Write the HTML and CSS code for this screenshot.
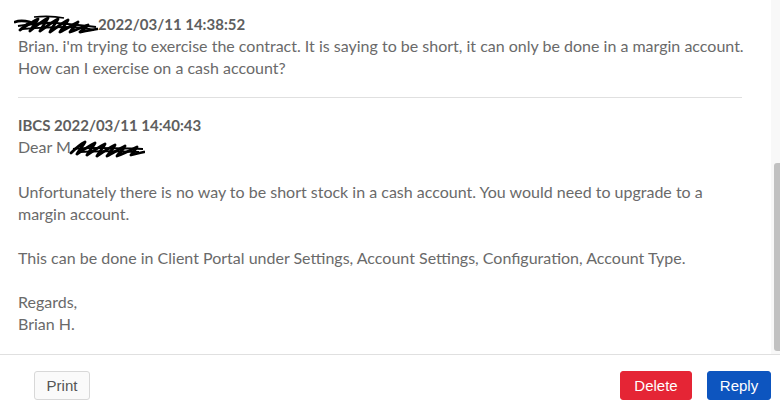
FILE: index.html
```html
<!DOCTYPE html>
<html>
<head>
<meta charset="utf-8">
<link rel="stylesheet" href="styles.css">
</head>
<body>
<div class="dialog">
  <div class="body-row">
    <div class="thread">
      <div class="msg">
        <div class="msg-head"><span class="redact redact-name"><svg width="84" height="22" viewBox="0 0 84 22"><path d="M1 9 C6 7 12 8 16 9 C12 12 8 15 6 17 C12 13 18 9 24 6 C22 10 18 14 16 18 C22 13 28 8 34 5 C32 9 28 14 26 18 C32 14 38 9 44 6 C42 10 38 14 36 19 C42 15 48 10 54 7 C52 11 48 15 46 19 C52 16 58 12 64 9 C62 12 58 16 56 19 C62 17 68 14 74 12 C72 15 68 17 66 19 C72 18 78 17 83 16" fill="none" stroke="#000" stroke-width="2.8" stroke-linecap="round" stroke-linejoin="round"/><path d="M4 13 C18 11 30 9 42 10 C54 11 66 12 82 14" fill="none" stroke="#000" stroke-width="2.2"/><path d="M8 16 C22 15 36 14 50 14 C62 14 72 15 80 17" fill="none" stroke="#000" stroke-width="2"/><path d="M20 4 C30 3 40 3 50 5" fill="none" stroke="#000" stroke-width="1.6"/></svg></span>2022/03/11 14:38:52</div>
        <p>Brian. i'm trying to exercise the contract. It is saying to be short, it can only be done in a margin account. How can I exercise on a cash account?</p>
      </div>
      <div class="msg">
        <div class="msg-head">IBCS 2022/03/11 14:40:43</div>
        <p>Dear M<span class="redact redact-inline"><svg width="76" height="22" viewBox="0 0 76 22"><path d="M2 16 C6 12 10 8 16 5 C14 9 10 13 8 17 C14 13 20 9 26 6 C24 10 20 14 18 18 C24 14 30 10 36 7 C34 11 30 15 28 19 C34 15 40 11 46 8 C44 12 40 16 38 19 C44 16 50 12 56 9 C54 13 50 16 48 19 C54 17 62 13 68 10 C66 13 64 16 62 18 C66 17 70 16 75 15" fill="none" stroke="#000" stroke-width="2.8" stroke-linecap="round" stroke-linejoin="round"/><path d="M4 12 C20 10 40 11 74 12" fill="none" stroke="#000" stroke-width="2"/><path d="M10 15 C26 14 46 14 70 15" fill="none" stroke="#000" stroke-width="1.8"/></svg></span></p>
        <p>Unfortunately there is no way to be short stock in a cash account. You would need to upgrade to a margin account.</p>
        <p>This can be done in Client Portal under Settings, Account Settings, Configuration, Account Type.</p>
        <p>Regards,<br>Brian H.</p>
      </div>
    </div>
    <div class="scrollbar"><div class="thumb"></div></div>
  </div>
  <div class="footer">
    <button class="btn btn-print">Print</button>
    <div class="actions">
      <button class="btn btn-delete">Delete</button>
      <button class="btn btn-reply">Reply</button>
    </div>
  </div>
</div>
</body>
</html>
```
FILE: styles.css
```css
* { box-sizing: border-box; }
html, body { margin: 0; padding: 0; background: #fff; }
body {
  width: 780px;
  height: 404px;
  overflow: hidden;
  font-family: Lato, "Open Sans", sans-serif;
  color: #6a6a6a;
}
.dialog {
  display: flex;
  flex-direction: column;
  height: 404px;
}
.body-row {
  display: flex;
  height: 355px;
  border-bottom: 1px solid #e0e0e0;
}
.thread {
  flex: 1;
  padding: 13px 29px 0 18px;
  overflow: hidden;
}
.msg {
  font-size: 16px;
  line-height: 22px;
}
.msg + .msg {
  border-top: 1px solid #e0e0e0;
  margin-top: 18px;
  padding-top: 16px;
}
.msg-head {
  font-size: 15px;
  font-weight: 700;
  color: #5e5e5e;
}
.msg p {
  margin: 0 -8px 22px 0;
}
.msg p:last-child { margin-bottom: 0; }
.redact {
  display: inline-block;
  vertical-align: middle;
  line-height: 0;
}
.redact-name { margin-left: -4px; margin-top: -4px; }
.redact-inline { margin-left: -2px; margin-top: -2px; }
.scrollbar {
  width: 9px;
  background: #f8f8f8;
  display: flex;
  flex-direction: column;
}
.thumb {
  margin: 163px 0 3px 3px;
  flex: 1;
  background: #c1c1c1;
  border-radius: 3px 0 0 3px;
}
.footer {
  flex: 1;
  display: flex;
  align-items: flex-start;
  justify-content: space-between;
  padding: 16px 9px 0 34px;
}
.actions {
  display: flex;
  gap: 15px;
}
.btn {
  height: 29px;
  border-radius: 3px;
  font-size: 15px;
  font-family: "Liberation Sans", Arial, sans-serif;
  padding: 0 11px;
  cursor: pointer;
}
.btn-print {
  background: #fafafa;
  border: 1px solid #d8d8d8;
  color: #555;
  width: 56px;
}
.btn-delete {
  background: #e52535;
  border: 1px solid #e52535;
  color: #fff;
  width: 72px;
}
.btn-reply {
  background: #0d55bf;
  border: 1px solid #0d55bf;
  color: #fff;
  width: 64px;
}
```
